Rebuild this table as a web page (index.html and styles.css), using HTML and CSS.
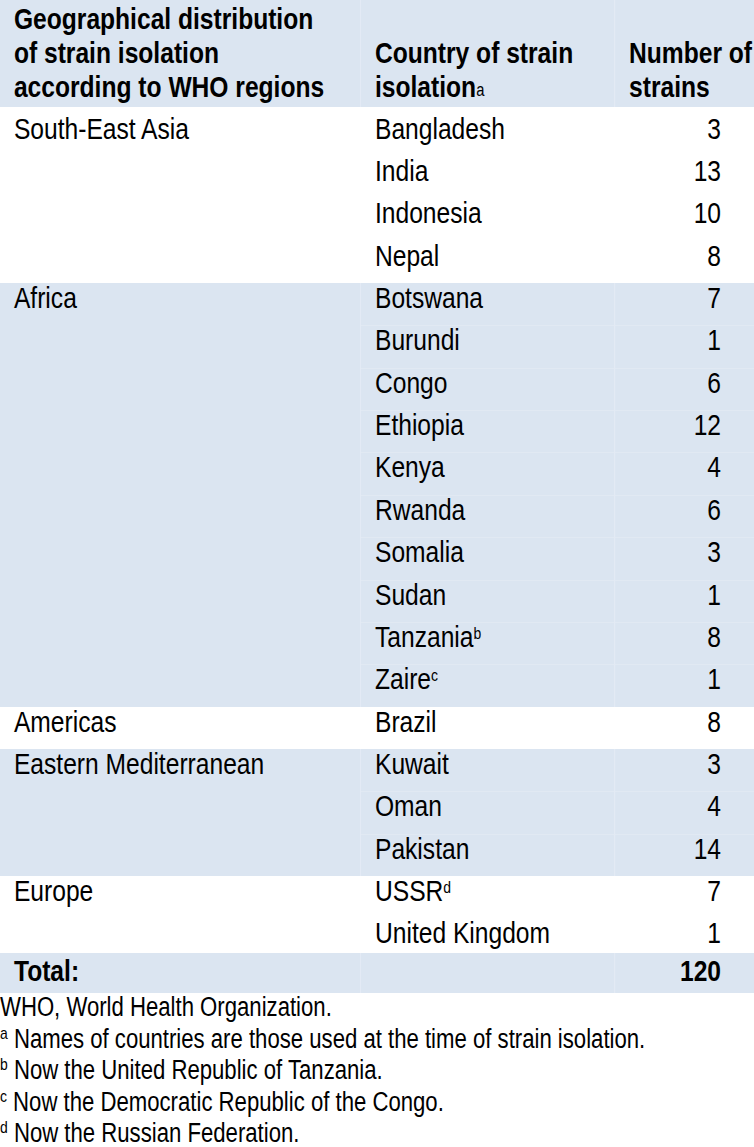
FILE: index.html
```html
<!DOCTYPE html>
<html lang="en">
<head>
<meta charset="utf-8">
<title>Geographical distribution of strain isolation</title>
<link rel="stylesheet" href="styles.css">
</head>
<body>
<div class="sheet">
<table class="strains">
  <colgroup>
    <col class="c-region">
    <col class="c-country">
    <col class="c-num">
  </colgroup>
  <thead>
    <tr class="head">
      <th class="region">Geographical distribution<br>of strain isolation<br>according to WHO regions</th>
      <th class="country">Country of strain<br>isolation<sup class="sup sup-h">a</sup></th>
      <th class="num-h">Number of<br>strains</th>
    </tr>
  </thead>
  <tbody class="band white">
    <tr class="first"><td rowspan="4" class="region">South-East Asia</td><td class="country">Bangladesh</td><td class="num">3</td></tr>
    <tr><td class="country">India</td><td class="num">13</td></tr>
    <tr><td class="country">Indonesia</td><td class="num">10</td></tr>
    <tr><td class="country">Nepal</td><td class="num">8</td></tr>
  </tbody>
  <tbody class="band blue">
    <tr><td rowspan="10" class="region">Africa</td><td class="country">Botswana</td><td class="num">7</td></tr>
    <tr><td class="country">Burundi</td><td class="num">1</td></tr>
    <tr><td class="country">Congo</td><td class="num">6</td></tr>
    <tr><td class="country">Ethiopia</td><td class="num">12</td></tr>
    <tr><td class="country">Kenya</td><td class="num">4</td></tr>
    <tr><td class="country">Rwanda</td><td class="num">6</td></tr>
    <tr><td class="country">Somalia</td><td class="num">3</td></tr>
    <tr><td class="country">Sudan</td><td class="num">1</td></tr>
    <tr><td class="country">Tanzania<sup class="sup">b</sup></td><td class="num">8</td></tr>
    <tr><td class="country">Zaire<sup class="sup">c</sup></td><td class="num">1</td></tr>
  </tbody>
  <tbody class="band white">
    <tr><td class="region">Americas</td><td class="country">Brazil</td><td class="num">8</td></tr>
  </tbody>
  <tbody class="band blue">
    <tr><td rowspan="3" class="region">Eastern Mediterranean</td><td class="country">Kuwait</td><td class="num">3</td></tr>
    <tr><td class="country">Oman</td><td class="num">4</td></tr>
    <tr><td class="country">Pakistan</td><td class="num">14</td></tr>
  </tbody>
  <tbody class="band white">
    <tr><td rowspan="2" class="region">Europe</td><td class="country">USSR<sup class="sup">d</sup></td><td class="num">7</td></tr>
    <tr class="last"><td class="country">United Kingdom</td><td class="num">1</td></tr>
  </tbody>
  <tfoot>
    <tr class="total">
      <td class="region">Total:</td>
      <td class="country"></td>
      <td class="num">120</td>
    </tr>
  </tfoot>
</table>
<div class="notes">
  <p class="note">WHO, World Health Organization.</p>
  <p class="note"><sup class="fsup">a</sup> Names of countries are those used at the time of strain isolation.</p>
  <p class="note"><sup class="fsup">b</sup> Now the United Republic of Tanzania.</p>
  <p class="note"><sup class="fsup">c</sup> Now the Democratic Republic of the Congo.</p>
  <p class="note"><sup class="fsup">d</sup> Now the Russian Federation.</p>
</div>
</div>
</body>
</html>
```

FILE: styles.css
```css
html, body {
  margin: 0;
  padding: 0;
  background: #ffffff;
  overflow: hidden;
}

body {
  width: 754px;
  font-family: "Liberation Sans", Arial, sans-serif;
  color: #000000;
}

/* The source uses a narrow Arial; Liberation Sans condensed to 82% width
   reproduces its proportions. All horizontal sizes below are pre-scale. */
.sheet {
  width: 919.5px;
  transform: scaleX(0.82);
  transform-origin: 0 0;
}

.strains {
  width: 919.5px;
  table-layout: fixed;
  border-collapse: collapse;
  border-spacing: 0;
  font-size: 30px;
}

.c-region { width: 439px; }
.c-country { width: 309.8px; }
.c-num { width: 170.7px; }

.strains th,
.strains td {
  padding: 0;
  vertical-align: top;
  text-align: left;
  white-space: nowrap;
  overflow: visible;
}

/* header */
.head {
  background: #dbe5f1;
}

.head th {
  font-weight: bold;
  line-height: 34px;
  height: 107px;
  box-sizing: border-box;
  padding-top: 1.6px;
  padding-bottom: 3.4px;
  vertical-align: bottom;
}

.head .region { padding-left: 17px; vertical-align: top; }
.head .country,
.head .num-h {
  padding-left: 18.3px;
  box-shadow: inset 1.2px 0 0 #e4ebf5;
}

/* bands */
.band.blue { background: #dbe5f1; }
.band.white { background: #ffffff; }

.band td {
  line-height: 30px;
  padding-bottom: 12.37px;
}

.band .region {
  padding-left: 17px;
}

.band .country {
  padding-left: 18.3px;
}

.band .num {
  text-align: right;
  padding-right: 40.2px;
}

.band.blue .country,
.band.blue .num {
  box-shadow: inset 1.2px 0 0 #e4ebf5;
}

.band.blue tr + tr .country,
.band.blue tr + tr .num {
  box-shadow: inset 1.2px 0 0 #e4ebf5, inset 0 1px 0 #e1e9f3;
}

.first td {
  padding-top: 6.6px;
}

.last td {
  padding-bottom: 5px;
}

.sup {
  font-size: 17px;
  line-height: 0;
  vertical-align: 8px;
}

.sup-h {
  font-weight: normal;
  font-size: 18px;
  vertical-align: 1px;
}

/* total */
.total {
  background: #dbe5f1;
}

.total td {
  font-weight: bold;
  line-height: 30px;
  padding-top: 2.4px;
  padding-bottom: 7.6px;
}

.total .region { padding-left: 17px; }
.total .country { box-shadow: inset 1.2px 0 0 #e4ebf5; }
.total .num {
  text-align: right;
  padding-right: 40.2px;
  box-shadow: inset 1.2px 0 0 #e4ebf5;
}

/* footnotes */
.notes {
  margin-top: -1px;
  font-size: 27px;
  line-height: 31.5px;
}

.note {
  margin: 0;
  white-space: nowrap;
}

.fsup {
  font-size: 17px;
  line-height: 0;
  vertical-align: 9px;
}
```
